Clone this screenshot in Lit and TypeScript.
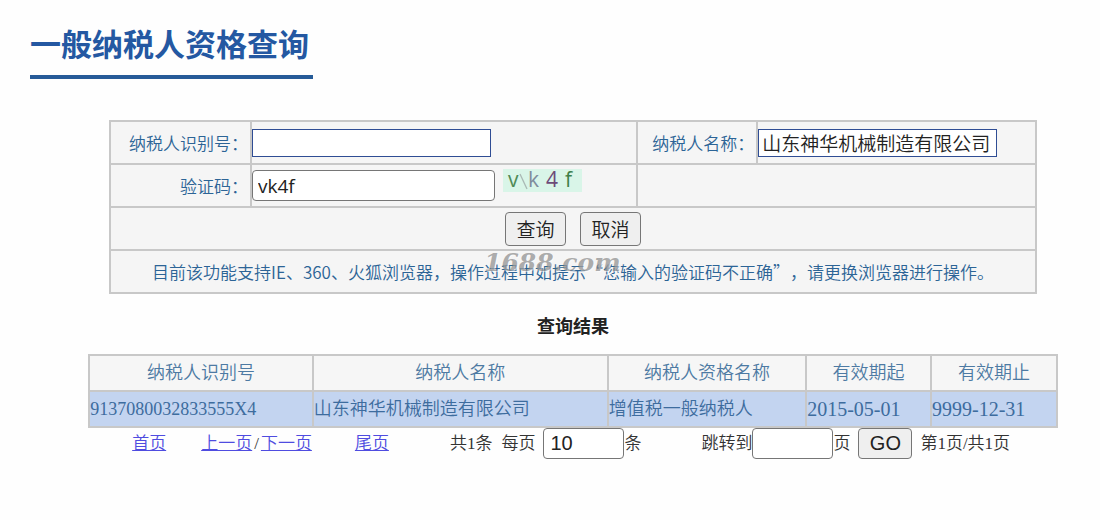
import { LitElement, html, css, svg } from "lit";
import { customElement, state } from "lit/decorators.js";

interface ResultRow {
  id: string;
  name: string;
  kind: string;
  from: string;
  to: string;
}

@customElement("captcha-image")
class CaptchaImage extends LitElement {
  static styles = css`
    :host {
      display: block;
    }
    .picture {
      display: block;
      width: 79px;
      height: 35px;
      overflow: visible;
    }
    .glyph {
      font: 21px "Open Sans", "Noto Sans", sans-serif;
    }
  `;

  render() {
    const glyphs = [
      { c: "v", x: 5, fill: "#4f8a56" },
      { c: "k", x: 25, fill: "#7f8c9c" },
      { c: "4", x: 43, fill: "#6d4a78" },
      { c: "f", x: 62, fill: "#3f7f4a" },
    ];
    return html`
      <svg class="picture" viewBox="0 0 79 35" role="img" aria-label="验证码">
        <rect y="6" width="79" height="23" fill="#d9f5e8"></rect>
        <path d="M17 11 L24 26" stroke="#a9b8b4" stroke-width="1.3"></path>
        ${glyphs.map(
          (g) => svg`<text class="glyph" x=${g.x} y="24" fill=${g.fill}>${g.c}</text>`
        )}
      </svg>
    `;
  }
}

@customElement("app-root")
class AppRoot extends LitElement {
  @state() private rows: ResultRow[] = [
    {
      id: "9137080032833555X4",
      name: "山东神华机械制造有限公司",
      kind: "增值税一般纳税人",
      from: "2015-05-01",
      to: "9999-12-31",
    },
  ];

  static styles = css`
    :host {
      display: block;
      box-sizing: border-box;
      min-height: 100vh;
      padding: 24px 0 24px 30px;
      background: #fefefe;
      color: #333;
      font-family: "Noto Sans CJK SC", sans-serif;
      text-spacing-trim: space-all;
    }
    * {
      box-sizing: border-box;
    }
    .title {
      display: inline-block;
      margin: 0;
      padding: 0 4px 13px 0;
      border-bottom: 4px solid #265b98;
      color: #2458a2;
      font-size: 31px;
      line-height: 38px;
      font-weight: 700;
    }
    .content {
      display: flex;
      flex-direction: column;
      align-items: center;
      padding: 41px 0 0 16px;
    }
    table {
      border-collapse: collapse;
      table-layout: fixed;
    }
    th,
    td {
      border: 2px solid #c8c8c8;
      padding: 0;
      font-weight: inherit;
    }
    .form-box {
      position: relative;
      width: 88%;
    }
    .form {
      width: 100%;
      background: #f5f5f5;
      color: #2c6496;
      font-size: 17px;
      line-height: 24px;
      font-weight: 350;
    }
    .form td {
      height: 43px;
    }
    .label {
      padding-right: 2px;
      text-align: right;
    }
    .c-label {
      width: 15.2%;
    }
    .c-field {
      width: 41.7%;
    }
    .c-label2 {
      width: 13%;
    }
    .row {
      display: flex;
      align-items: center;
    }
    .center {
      justify-content: center;
      gap: 14px;
    }
    .note {
      text-align: center;
      white-space: nowrap;
    }
    input {
      display: block;
      margin: 0;
      background: #fff;
      color: #222;
      outline: none;
    }
    .plain {
      width: 239px;
      height: 28px;
      padding: 0 3px;
      border: 1px solid #2f4d94;
      font: 19px "Noto Sans CJK SC", sans-serif;
      font-weight: 350;
    }
    .round {
      width: 243px;
      height: 31px;
      padding: 0 5px;
      border: 1px solid #767676;
      border-radius: 4px;
      font: 19px "Open Sans", sans-serif;
    }
    .captcha {
      margin: -10px 0 0 8px;
    }
    button {
      display: block;
      margin: 0;
      padding: 0;
      border: 1px solid #767676;
      border-radius: 4px;
      background: #efefef;
      color: #222;
    }
    .action {
      width: 61px;
      height: 34px;
      font: 19px "Noto Sans CJK SC", sans-serif;
      font-weight: 350;
    }
    .watermark {
      position: absolute;
      left: 50%;
      bottom: 17px;
      margin-left: -89px;
      color: rgba(120, 120, 120, 0.6);
      font: italic bold 25px "DejaVu Serif", serif;
      line-height: 28px;
      text-shadow: 1px 1px 0 rgba(255, 255, 255, 0.5);
      pointer-events: none;
    }
    .subtitle {
      margin: 19px 0 17px;
      color: #222;
      font-size: 18px;
      line-height: 24px;
      font-weight: 700;
    }
    .results {
      width: 92%;
      background: #f6f6f6;
      color: #4d7aa3;
      font-family: "Liberation Serif", "Noto Sans CJK SC", serif;
      font-size: 18px;
      line-height: 24px;
      font-weight: 350;
    }
    .results th,
    .results td {
      height: 36px;
      white-space: nowrap;
    }
    .hit {
      background: #c3d4f0;
      color: #3d6c9e;
    }
    .date {
      font-size: 20px;
    }
    .r1 {
      width: 23.1%;
    }
    .r2 {
      width: 30.5%;
    }
    .r3 {
      width: 20.5%;
    }
    .r4 {
      width: 12.9%;
    }
    .pager {
      display: flex;
      align-items: center;
      width: 92%;
      padding-left: 44px;
      font-family: "Liberation Serif", "Noto Sans CJK SC", serif;
      font-size: 17px;
      line-height: 24px;
      font-weight: 350;
      white-space: nowrap;
    }
    .pager a {
      color: #4f4ce0;
      text-decoration: underline;
    }
    .prevnext {
      display: flex;
      gap: 2px;
      margin: 0 43px 0 35px;
    }
    .total {
      margin: 0 9px 0 61px;
    }
    .pager label {
      display: flex;
      align-items: center;
    }
    .size {
      gap: 8px;
    }
    .jump {
      margin-left: 60px;
    }
    .num {
      width: 81px;
      height: 31px;
      padding: 0 6px;
      border: 1px solid #767676;
      border-radius: 4px;
      font: 20px "Liberation Sans", sans-serif;
    }
    .go {
      width: 54px;
      height: 31px;
      margin: 0 8px;
      font: 20px "Liberation Sans", sans-serif;
    }
  `;

  render() {
    return html`
      <h1 class="title">一般纳税人资格查询</h1>
      <div class="content">
        <div class="form-box">
          <table class="form">
            <colgroup>
              <col class="c-label" />
              <col class="c-field" />
              <col class="c-label2" />
              <col />
            </colgroup>
            <tbody>
              <tr>
                <td class="label"><label for="taxid">纳税人识别号：</label></td>
                <td><input id="taxid" class="plain" type="text" /></td>
                <td class="label"><label for="taxname">纳税人名称：</label></td>
                <td>
                  <input id="taxname" class="plain" type="text" .value=${"山东神华机械制造有限公司"} />
                </td>
              </tr>
              <tr>
                <td class="label"><label for="code">验证码：</label></td>
                <td>
                  <div class="row">
                    <input id="code" class="round" type="text" .value=${"vk4f"} />
                    <captcha-image class="captcha"></captcha-image>
                  </div>
                </td>
                <td colspan="2"></td>
              </tr>
              <tr>
                <td colspan="4">
                  <div class="row center">
                    <button class="action" type="button">查询</button>
                    <button class="action" type="button">取消</button>
                  </div>
                </td>
              </tr>
              <tr>
                <td colspan="4" class="note">目前该功能支持IE、360、火狐浏览器，操作过程中如提示“您输入的验证码不正确”，请更换浏览器进行操作。</td>
              </tr>
            </tbody>
          </table>
          <span class="watermark">1688.com</span>
        </div>

        <h2 class="subtitle">查询结果</h2>

        <table class="results">
          <colgroup>
            <col class="r1" />
            <col class="r2" />
            <col class="r3" />
            <col class="r4" />
            <col />
          </colgroup>
          <thead>
            <tr>
              <th>纳税人识别号</th>
              <th>纳税人名称</th>
              <th>纳税人资格名称</th>
              <th>有效期起</th>
              <th>有效期止</th>
            </tr>
          </thead>
          <tbody>
            ${this.rows.map(
              (r) => html`<tr class="hit">
                <td>${r.id}</td>
                <td>${r.name}</td>
                <td>${r.kind}</td>
                <td class="date">${r.from}</td>
                <td class="date">${r.to}</td>
              </tr>`
            )}
          </tbody>
        </table>

        <div class="pager">
          <a href="#first">首页</a>
          <span class="prevnext"><a href="#prev">上一页</a><span>/</span><a href="#next">下一页</a></span>
          <a href="#last">尾页</a>
          <span class="total">共1条</span>
          <label class="size" for="size">每页 <input id="size" class="num" type="text" .value=${"10"} /></label>
          <span>条</span>
          <label class="jump" for="page">跳转到<input id="page" class="num" type="text" /></label>
          <span>页</span>
          <button class="go" type="button">GO</button>
          <span>第1页/共1页</span>
        </div>
      </div>
    `;
  }
}
